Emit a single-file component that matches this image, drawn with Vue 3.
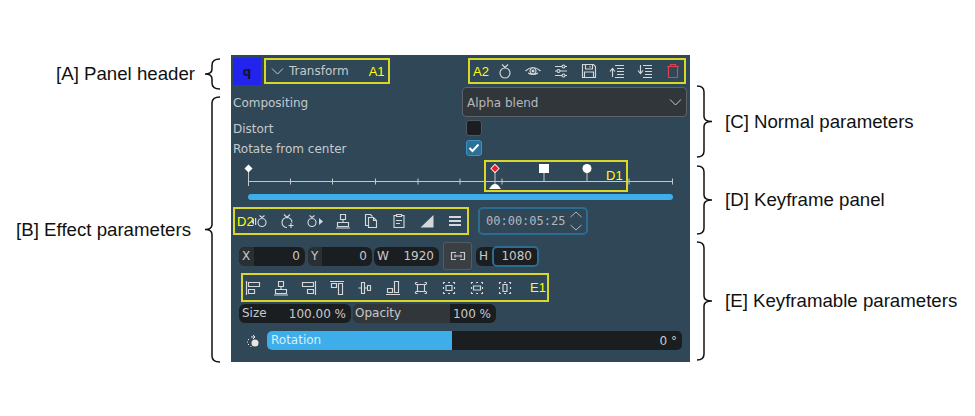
<template>
  <main class="figure">
    <aside class="notes-left">
      <div class="note note-a">
        <span>[A] Panel header</span>
        <svg class="brace" width="16" height="32" viewBox="0 0 16 32"><path :d="leftBrace(32)" /></svg>
      </div>
      <div class="note note-b">
        <span>[B] Effect parameters</span>
        <svg class="brace" width="16" height="267" viewBox="0 0 16 267"><path :d="leftBrace(267)" /></svg>
      </div>
    </aside>

    <section class="panel">
      <header class="row-head">
        <div class="logo">q</div>
        <div class="mark a1">
          <svg class="chev" width="13" height="8" viewBox="0 0 13 8"><path d="M1 1.500l5.500 5.500 5.500-5.500" /></svg>
          <span class="title">Transform</span>
          <span class="tag tag-a1">A1</span>
        </div>
        <div class="mark a2">
          <span class="tag tag-a2">A2</span>
          <div class="icons">
            <svg v-for="ic in headIcons" :key="ic.n" class="icon" :class="ic.c" viewBox="0 0 16 16">
              <path :d="ic.s" class="st" /><path v-if="ic.f" :d="ic.f" class="fl" />
            </svg>
          </div>
        </div>
      </header>

      <div class="row-combo">
        <span class="lbl">Compositing</span>
        <div class="combo">
          <span class="combo-text">Alpha blend</span>
          <svg width="13" height="8" viewBox="0 0 13 8"><path d="M1 1.500l5.500 5.500 5.500-5.500" /></svg>
        </div>
      </div>
      <div class="row-check first">
        <span class="lbl">Distort</span>
        <div class="check"></div>
      </div>
      <div class="row-check second">
        <span class="lbl">Rotate from center</span>
        <div class="check on">
          <svg width="12" height="10" viewBox="0 0 12 10"><path d="M1.500 5l3 3 6-6.500" /></svg>
        </div>
      </div>

      <div class="timeline">
        <svg width="459" height="40" viewBox="0 0 459 40">
          <path class="axis" d="M17 21.500h425" />
          <path v-for="x in ticks" :key="x" class="axis thin" :d="`M${x} 18.500v6`" />
          <path class="axis" d="M17.500 10v16M264 10v16M313 10v11M356 10v11" />
          <path class="key" d="M17.500 4.500l4 4-4 4-4-4z" />
          <path class="key" d="M264 3.800l4.700 4.700-4.700 4.700-4.700-4.700z" />
          <path class="red" d="M264 5l3.500 3.500-3.500 3.500-3.500-3.500z" />
          <rect class="key" x="308" y="4" width="10" height="9" />
          <circle class="key" cx="356" cy="8.500" r="4.500" />
          <path class="key" d="M258 29l3-4q3-2 6 0l3 4z" />
        </svg>
        <div class="mark d1"><span class="tag">D1</span></div>
        <div class="track"></div>
      </div>

      <div class="row-tools">
        <div class="mark d2">
          <span class="tag tag-d2">D2</span>
          <div class="icons">
            <svg v-for="ic in keyIcons" :key="ic.n" class="icon" viewBox="0 0 16 16">
              <path :d="ic.s" class="st" /><path v-if="ic.f" :d="ic.f" class="fl" />
            </svg>
          </div>
        </div>
        <div class="time">
          <span>00:00:05:25</span>
          <svg width="14" height="22" viewBox="0 0 14 22">
            <path d="M1.500 7l5.500-5 5.500 5M1.500 15l5.500 5 5.500-5" />
          </svg>
        </div>
      </div>

      <div class="row-geom">
        <div class="spin w-x"><span class="spin-l lit">X</span><span class="spin-v">0</span></div>
        <div class="spin w-y"><span class="spin-l lit">Y</span><span class="spin-v">0</span></div>
        <div class="spin w-w"><span class="spin-l">W</span><span class="spin-v">1920</span></div>
        <div class="link">
          <svg width="16" height="10" viewBox="0 0 16 10">
            <path d="M6 1.500H1.500v7H6M10 1.500h4.500v7H10M5 3.500v3M11 3.500v3M5 5h6" />
          </svg>
        </div>
        <div class="spin w-h"><span class="spin-l">H</span><span class="spin-box">1080</span></div>
      </div>

      <div class="mark e1">
        <div class="icons">
          <svg v-for="ic in alignIcons" :key="ic.n" class="icon" viewBox="0 0 16 16">
            <path :d="ic.s" class="st" />
          </svg>
        </div>
        <span class="tag tag-e1">E1</span>
      </div>

      <div class="row-size">
        <div class="spin w-size"><span class="spin-l">Size</span><span class="spin-v">100.00 %</span></div>
        <div class="opacity">
          <span class="op-fill">Opacity</span>
          <span class="spin-v">100 %</span>
        </div>
      </div>

      <div class="row-rot">
        <svg class="rot-icon" width="16" height="16" viewBox="0 0 16 16">
          <path d="M2 9h1M3 12l1-1M6 14v-1M3 6l1 1M6 4h3M8 2l2 2-2 2" class="dots" />
          <circle cx="10" cy="10" r="3.500" />
        </svg>
        <div class="rot">
          <div class="rot-fill" :style="{ width: rotationFill + 'px' }">Rotation</div>
          <span class="rot-v">0 °</span>
        </div>
      </div>
    </section>

    <aside class="notes-right">
      <div class="rnote note-c">
        <svg class="brace" width="16" height="73" viewBox="0 0 16 73"><path :d="rightBrace(73)" /></svg>
        <span>[C] Normal parameters</span>
      </div>
      <div class="rnote note-d">
        <svg class="brace" width="16" height="70" viewBox="0 0 16 70"><path :d="rightBrace(70)" /></svg>
        <span>[D] Keyframe panel</span>
      </div>
      <div class="rnote note-e">
        <svg class="brace" width="16" height="120" viewBox="0 0 16 120"><path :d="rightBrace(120)" /></svg>
        <span>[E] Keyframable parameters</span>
      </div>
    </aside>
  </main>
</template>

<script setup>
const rotationFill = 185;
const ticks = [59.5, 101.5, 144.5, 187, 229, 271, 398, 441.5];

function leftBrace(h) {
  const m = h / 2;
  return `M16 1Q8 1 8 7V${m - 5}Q8 ${m} 1 ${m}Q8 ${m} 8 ${m + 5}V${h - 7}Q8 ${h - 1} 16 ${h - 1}`;
}
function rightBrace(h) {
  const m = h / 2;
  return `M0 1Q7 1 7 7V${m - 5}Q7 ${m} 15 ${m}Q7 ${m} 7 ${m + 5}V${h - 7}Q7 ${h - 1} 0 ${h - 1}`;
}

const watch = "M5 1.500l3 3 3-3M13 10a5 5 0 1 1-10 0a5 5 0 1 1 10 0z";

const headIcons = [
  { n: "watch", s: watch },
  { n: "eye", s: "M0.500 8Q8 1 15.500 8M3 10Q8 13 13 10M8 5a3 3 0 1 0 .01 0", f: "M8 6.500a1.500 1.500 0 1 0 .01 0z" },
  { n: "sliders", s: "M2 3.500h7M12 3.500h2M2 8h2M7 8h7M2 12.500h7M12 12.500h2M10.500 2a1.500 1.500 0 1 0 .01 0M5.500 6.500a1.500 1.500 0 1 0 .01 0M10.500 11a1.500 1.500 0 1 0 .01 0" },
  { n: "save", s: "M1.500 1.500h11l2 2v11h-13zM4.500 1.500v4.500h7v-4.500M9 3v1.500M3.500 14.500v-5.500h9v5.500" },
  { n: "up", s: "M6 2.500h9M8 5.500h7M8 8.500h7M8 11.500h7M6 14.500h9M3.500 14V6M1 8.500l2.500-3 2.500 3" },
  { n: "down", s: "M6 2.500h9M8 5.500h7M8 8.500h7M8 11.500h7M6 14.500h9M3.500 2v8M1 7.500l2.500 3 2.500-3" },
  { n: "trash", c: "danger", s: "M2 3.500h12M5.500 3.500v-2h5v2M3.500 3.500v11h9v-11" },
];

const keyIcons = [
  { n: "prev", s: "M8.500 2.500l2.500 2 2.500-2M15 9.500a4 4 0 1 1-8 0a4 4 0 1 1 8 0z", f: "M0 8.500l3-3.500v7zM4 5h1.200v7H4z" },
  { n: "add", s: "M5 1.500l3 3 3-3M8 14.500a5 5 0 1 1 5-5M9.500 12.500h5M12 10v5" },
  { n: "next", s: "M2.500 2.500l2.500 2 2.500-2M9 9.500a4 4 0 1 1-8 0a4 4 0 1 1 8 0z", f: "M16 8.500l-4 3.500V5z" },
  { n: "centre", s: "M5.500 1.500h5v5h-5zM2.500 9.500h11v4h-11zM8 6.500v3M1 15h14" },
  { n: "copy", s: "M5.500 12.500h-3v-11h5l2 2M5.500 4.500h5l3 3v7h-8zM10.500 4.500v3h3" },
  { n: "paste", s: "M5 2.500H3v12h10v-12h-2M5.500 1.500h5v2h-5zM5 7.500h6M5 10.500h4" },
  { n: "ramp", s: "", f: "M1.500 14.500L14.500 2v12.500z" },
  { n: "menu", s: "", f: "M2 3h12v2H2zM2 7h12v2H2zM2 11h12v2H2z" },
];

const frame = "M3 4.500h1M12 4.500h1M3 11.500h1M12 11.500h1M2.500 2.500h2M11.500 2.500h2M2.500 13.500h2M11.500 13.500h2M2.500 2.500v2M13.500 2.500v2M2.500 11.500v2M13.500 11.500v2";
const dashed = "M2.500 4V2.500H4M7 2.500h2M12 2.500h1.500V4M2.500 7v2M13.500 7v2M2.500 12v1.500H4M7 13.500h2M12 13.500h1.500V12";

const alignIcons = [
  { n: "l", s: "M1.500 1v14M3.500 2.500h11v4h-11zM3.500 9.500h6v4h-6z" },
  { n: "c", s: "M5.500 1.500h5v5h-5zM2.500 9.500h11v4h-11zM8 6.500v3M1 15h14" },
  { n: "r", s: "M14.500 1v14M1.500 2.500h11v4h-11zM6.500 9.500h6v4h-6z" },
  { n: "t", s: "M1 1.500h14M2.500 3.500h5v4h-5zM9.500 3.500h4v11h-4z" },
  { n: "m", s: "M4.500 2.500h3v11h-3zM10.500 5.500h3v5h-3zM1.500 8h3M7.500 8h3" },
  { n: "b", s: "M1 14.500h14M2.500 8.500h5v4h-5zM9.500 1.500h4v11h-4z" },
  { n: "fit", s: frame + "M4.500 4.500h7v7h-7z" },
  { n: "fit2", s: dashed + "M5 5.500h6v5H5z" },
  { n: "fit3", s: dashed + "M4.500 6h7v4h-7z" },
  { n: "fit4", s: dashed + "M6 4.500h4v7H6z" },
];
</script>

<style>
html,
body {
  margin: 0;
  background: #fff;
}
</style>

<style scoped>
.figure {
  display: flex;
  box-sizing: border-box;
  width: 975px;
  height: 416px;
  padding-top: 55px;
  overflow: hidden;
  background: #fff;
  font-family: "Liberation Sans", Arial, sans-serif;
  font-size: 18.67px;
  color: #111;
}

.brace path {
  fill: none;
  stroke: #111;
  stroke-width: 1.5;
}

.notes-left {
  display: flex;
  flex-direction: column;
  flex: none;
  width: 231px;
  padding-top: 3px;
  box-sizing: border-box;
}

.note {
  display: flex;
  align-items: center;
  justify-content: flex-end;
  padding-right: 11px;
}

.note-a {
  height: 32px;
}

.note-a span {
  margin-right: 9px;
}

.note-b {
  height: 267px;
  margin-top: 6px;
}

.note-b span {
  margin-right: 13px;
}

.notes-right {
  display: flex;
  flex-direction: column;
  padding-left: 7px;
  padding-top: 30px;
}

.rnote {
  display: flex;
  align-items: center;
}

.rnote span {
  margin-left: 12px;
  white-space: nowrap;
}

.note-c {
  height: 73px;
}

.note-d {
  height: 70px;
  margin-top: 7px;
}

.note-e {
  height: 120px;
  margin-top: 6px;
}

.panel {
  flex: none;
  display: flex;
  flex-direction: column;
  box-sizing: border-box;
  width: 459px;
  height: 307px;
  padding-top: 3px;
  background: #2f4757;
  font-family: "DejaVu Sans", sans-serif;
  font-size: 12px;
  color: #c6cacd;
}

.mark {
  box-sizing: border-box;
  border: 2px solid #d8d82a;
}

.tag {
  font-family: "Liberation Sans", Arial, sans-serif;
  font-size: 13px;
  color: #ffff00;
  white-space: nowrap;
}

.icons {
  display: flex;
  gap: 12px;
}

.icon {
  flex: none;
  width: 16px;
  height: 16px;
  color: #d4d8da;
}

.icon.danger {
  color: #da4453;
}

.st {
  fill: none;
  stroke: currentColor;
  stroke-width: 1.15;
}

.fl {
  fill: currentColor;
}

.row-head {
  display: flex;
  height: 26px;
  padding-left: 2px;
}

.logo {
  width: 28px;
  height: 27px;
  background: #2323ee;
  color: #14142a;
  font-weight: 700;
  font-size: 12px;
  line-height: 28px;
  text-align: center;
}

.a1 {
  display: flex;
  align-items: center;
  width: 126px;
  margin-left: 3px;
  padding-left: 5px;
}

.chev path,
.combo path {
  fill: none;
  stroke: #c6cacd;
  stroke-width: 1;
}

.title {
  margin-left: 5px;
}

.tag-a1 {
  margin-left: 20px;
}

.a2 {
  display: flex;
  align-items: center;
  width: 218px;
  margin-left: 78px;
  padding-left: 3px;
}

.tag-a2 {
  width: 18px;
  margin-right: 6px;
}

.row-combo {
  display: flex;
  align-items: center;
  height: 30px;
  margin-top: 3px;
  padding-left: 2px;
}

.lbl {
  width: 229px;
  flex: none;
  padding-top: 2px;
}

.combo {
  display: flex;
  align-items: center;
  justify-content: space-between;
  box-sizing: border-box;
  width: 225px;
  height: 30px;
  padding: 0 4px;
  background: #31363b;
  border: 1px solid #5d6368;
  border-radius: 4px;
  color: #b4b8bb;
}

.combo-text {
  padding-top: 2px;
}

.row-check {
  display: flex;
  align-items: center;
  height: 16px;
  padding-left: 2px;
}

.row-check .lbl {
  width: 233px;
}

.first {
  margin-top: 3px;
}

.second {
  margin-top: 4px;
}

.check {
  box-sizing: border-box;
  width: 16px;
  height: 16px;
  background: #1b1e20;
  border: 1px solid #51565a;
  border-radius: 3px;
}

.check.on {
  display: flex;
  align-items: center;
  justify-content: center;
  background: #2d6f97;
  border-color: #3a93c8;
}

.check.on path {
  fill: none;
  stroke: #fff;
  stroke-width: 2;
}

.timeline {
  position: relative;
  height: 40px;
  margin-top: 4px;
}

.timeline svg {
  display: block;
}

.axis {
  fill: none;
  stroke: #c3c8cb;
  stroke-width: 1;
}

.key {
  fill: #fff;
}

.red {
  fill: #ee1c25;
}

.d1 {
  position: absolute;
  left: 253px;
  top: 0;
  width: 144px;
  height: 32px;
  padding: 7px 0 0 120px;
  line-height: 14px;
}

.track {
  position: absolute;
  left: 17px;
  top: 34px;
  width: 425px;
  height: 6px;
  border-radius: 3px;
  background: #3daee9;
}

.row-tools {
  display: flex;
  height: 28px;
  margin-top: 7px;
  padding-left: 2px;
}

.d2 {
  display: flex;
  align-items: center;
  width: 236px;
  padding-left: 2px;
}

.tag-d2 {
  width: 14px;
}

.time {
  display: flex;
  align-items: center;
  justify-content: space-between;
  box-sizing: border-box;
  width: 110px;
  height: 28px;
  margin-left: 9px;
  padding: 0 3px 0 6px;
  border: 2px solid #2c6c90;
  border-radius: 5px;
  font-family: "DejaVu Sans Mono", monospace;
  color: #b4b8bb;
}

.time path {
  fill: none;
  stroke: #b4b8bb;
  stroke-width: 1;
}

.row-geom {
  display: flex;
  align-items: center;
  height: 28px;
  margin-top: 7px;
  padding-left: 8px;
}

.spin {
  display: flex;
  align-items: center;
  box-sizing: border-box;
  height: 19px;
  margin-right: 3px;
  background: #1b1e20;
  border-radius: 6px;
  color: #c6cacd;
  overflow: hidden;
}

.spin-l {
  padding: 0 4px 0 3px;
  line-height: 19px;
}

.spin-l.lit {
  background: #2a2f33;
}

.spin-v {
  margin-left: auto;
  padding-right: 5px;
  white-space: nowrap;
}

.w-x {
  width: 66px;
}

.w-y {
  width: 64px;
  margin-right: 2px;
}

.w-w {
  width: 65px;
  margin-right: 4px;
}

.w-h {
  width: 63px;
  margin-right: 0;
  overflow: visible;
}

.spin-box {
  box-sizing: border-box;
  width: 47px;
  height: 21px;
  line-height: 17px;
  margin-left: auto;
  padding-right: 5px;
  text-align: right;
  border: 2px solid #2c6c90;
  border-radius: 5px;
}

.link {
  display: flex;
  align-items: center;
  justify-content: center;
  box-sizing: border-box;
  width: 29px;
  height: 28px;
  margin-right: 4px;
  background: #3a3f44;
  border: 1px solid #565b60;
  border-radius: 3px;
}

.link path {
  fill: none;
  stroke: #c6cacd;
  stroke-width: 1.2;
}

.e1 {
  display: flex;
  align-items: center;
  width: 308px;
  height: 29px;
  margin: 3px 0 0 10px;
  padding-left: 2px;
}

.tag-e1 {
  margin-left: 17px;
}

.row-size {
  display: flex;
  height: 19px;
  margin-top: 2px;
  padding-left: 8px;
}

.w-size {
  width: 112px;
  margin-right: 2px;
}

.opacity {
  display: flex;
  align-items: center;
  width: 143px;
  background: #1b1e20;
  border-radius: 6px;
  overflow: hidden;
}

.op-fill {
  box-sizing: border-box;
  width: 97px;
  height: 19px;
  padding-left: 2px;
  line-height: 19px;
  background: #31363b;
}

.row-rot {
  display: flex;
  align-items: center;
  height: 19px;
  margin-top: 8px;
  padding-left: 14px;
}

.rot-icon {
  flex: none;
}

.rot-icon .dots {
  fill: none;
  stroke: #e4e6e7;
  stroke-width: 1;
}

.rot-icon circle {
  fill: #e4e6e7;
}

.rot {
  display: flex;
  align-items: center;
  justify-content: space-between;
  width: 415px;
  height: 19px;
  margin-left: 6px;
  background: #1b1e20;
  border-radius: 5px;
  overflow: hidden;
}

.rot-fill {
  box-sizing: border-box;
  height: 19px;
  padding-left: 4px;
  line-height: 19px;
  background: #3daee9;
  color: #d8eefa;
}

.rot-v {
  padding-right: 5px;
}
</style>
